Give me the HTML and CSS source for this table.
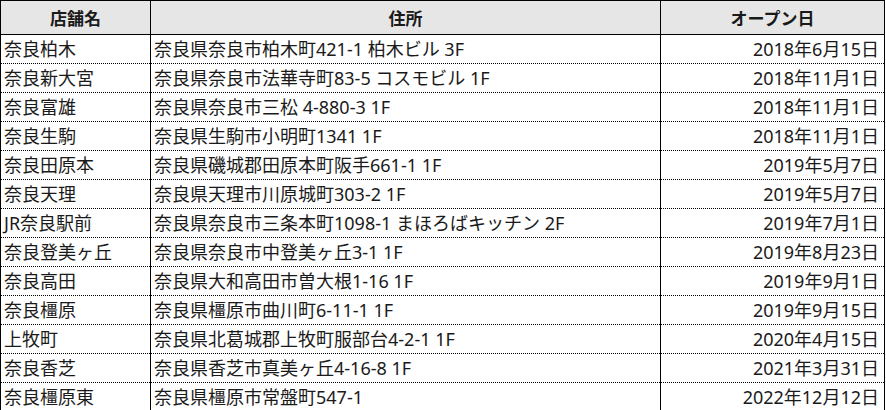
FILE: index.html
```html
<!DOCTYPE html>
<html lang="ja">
<head>
<meta charset="utf-8">
<link rel="stylesheet" href="styles.css">
</head>
<body>
<table class="shops">
  <colgroup>
    <col class="c-name">
    <col class="c-addr">
    <col class="c-date">
  </colgroup>
  <thead>
    <tr><th>店舗名</th><th>住所</th><th>オープン日</th></tr>
  </thead>
  <tbody>
    <tr><td>奈良柏木</td><td>奈良県奈良市柏木町421-1 柏木ビル 3F</td><td class="date">2018年6月15日</td></tr>
    <tr><td>奈良新大宮</td><td>奈良県奈良市法華寺町83-5 コスモビル 1F</td><td class="date">2018年11月1日</td></tr>
    <tr><td>奈良富雄</td><td>奈良県奈良市三松 4-880-3 1F</td><td class="date">2018年11月1日</td></tr>
    <tr><td>奈良生駒</td><td>奈良県生駒市小明町1341 1F</td><td class="date">2018年11月1日</td></tr>
    <tr><td>奈良田原本</td><td>奈良県磯城郡田原本町阪手661-1 1F</td><td class="date">2019年5月7日</td></tr>
    <tr><td>奈良天理</td><td>奈良県天理市川原城町303-2 1F</td><td class="date">2019年5月7日</td></tr>
    <tr><td>JR奈良駅前</td><td>奈良県奈良市三条本町1098-1 まほろばキッチン 2F</td><td class="date">2019年7月1日</td></tr>
    <tr><td>奈良登美ヶ丘</td><td>奈良県奈良市中登美ヶ丘3-1 1F</td><td class="date">2019年8月23日</td></tr>
    <tr><td>奈良高田</td><td>奈良県大和高田市曽大根1-16 1F</td><td class="date">2019年9月1日</td></tr>
    <tr><td>奈良橿原</td><td>奈良県橿原市曲川町6-11-1 1F</td><td class="date">2019年9月15日</td></tr>
    <tr><td>上牧町</td><td>奈良県北葛城郡上牧町服部台4-2-1 1F</td><td class="date">2020年4月15日</td></tr>
    <tr><td>奈良香芝</td><td>奈良県香芝市真美ヶ丘4-16-8 1F</td><td class="date">2021年3月31日</td></tr>
    <tr><td>奈良橿原東</td><td>奈良県橿原市常盤町547-1</td><td class="date">2022年12月12日</td></tr>
  </tbody>
</table>
</body>
</html>
```
FILE: styles.css
```css
html, body {
  margin: 0;
  padding: 0;
  background: #ffffff;
}

body {
  font-family: "Noto Sans", "Noto Sans CJK JP", sans-serif;
  color: #1a1a1a;
}

.shops {
  border-collapse: collapse;
  table-layout: fixed;
  width: 884px;
  border: 1px solid #000;
  font-size: 18px;
}

.c-name { width: 150px; }
.c-addr { width: 510px; }
.c-date { width: 224px; }

.shops th {
  height: 33px;
  background: #e7e6e6;
  font-family: "Noto Sans CJK JP", sans-serif;
  font-weight: bold;
  font-size: 17px;
  text-align: center;
  border-left: 1px solid #000;
  border-right: 1px solid #000;
  border-bottom: 1px solid #000;
  padding: 0;
  line-height: 1;
}

.shops td {
  height: 28px;
  padding: 0 4px 0 3px;
  line-height: 1;
  white-space: nowrap;
  border-left: 1px solid #000;
  border-right: 1px solid #000;
  border-top: 1px dotted #000;
  vertical-align: middle;
}

.shops tbody tr:first-child td {
  border-top: 1px solid #000;
}

.shops td.date {
  text-align: right;
  padding-right: 5px;
}
```
